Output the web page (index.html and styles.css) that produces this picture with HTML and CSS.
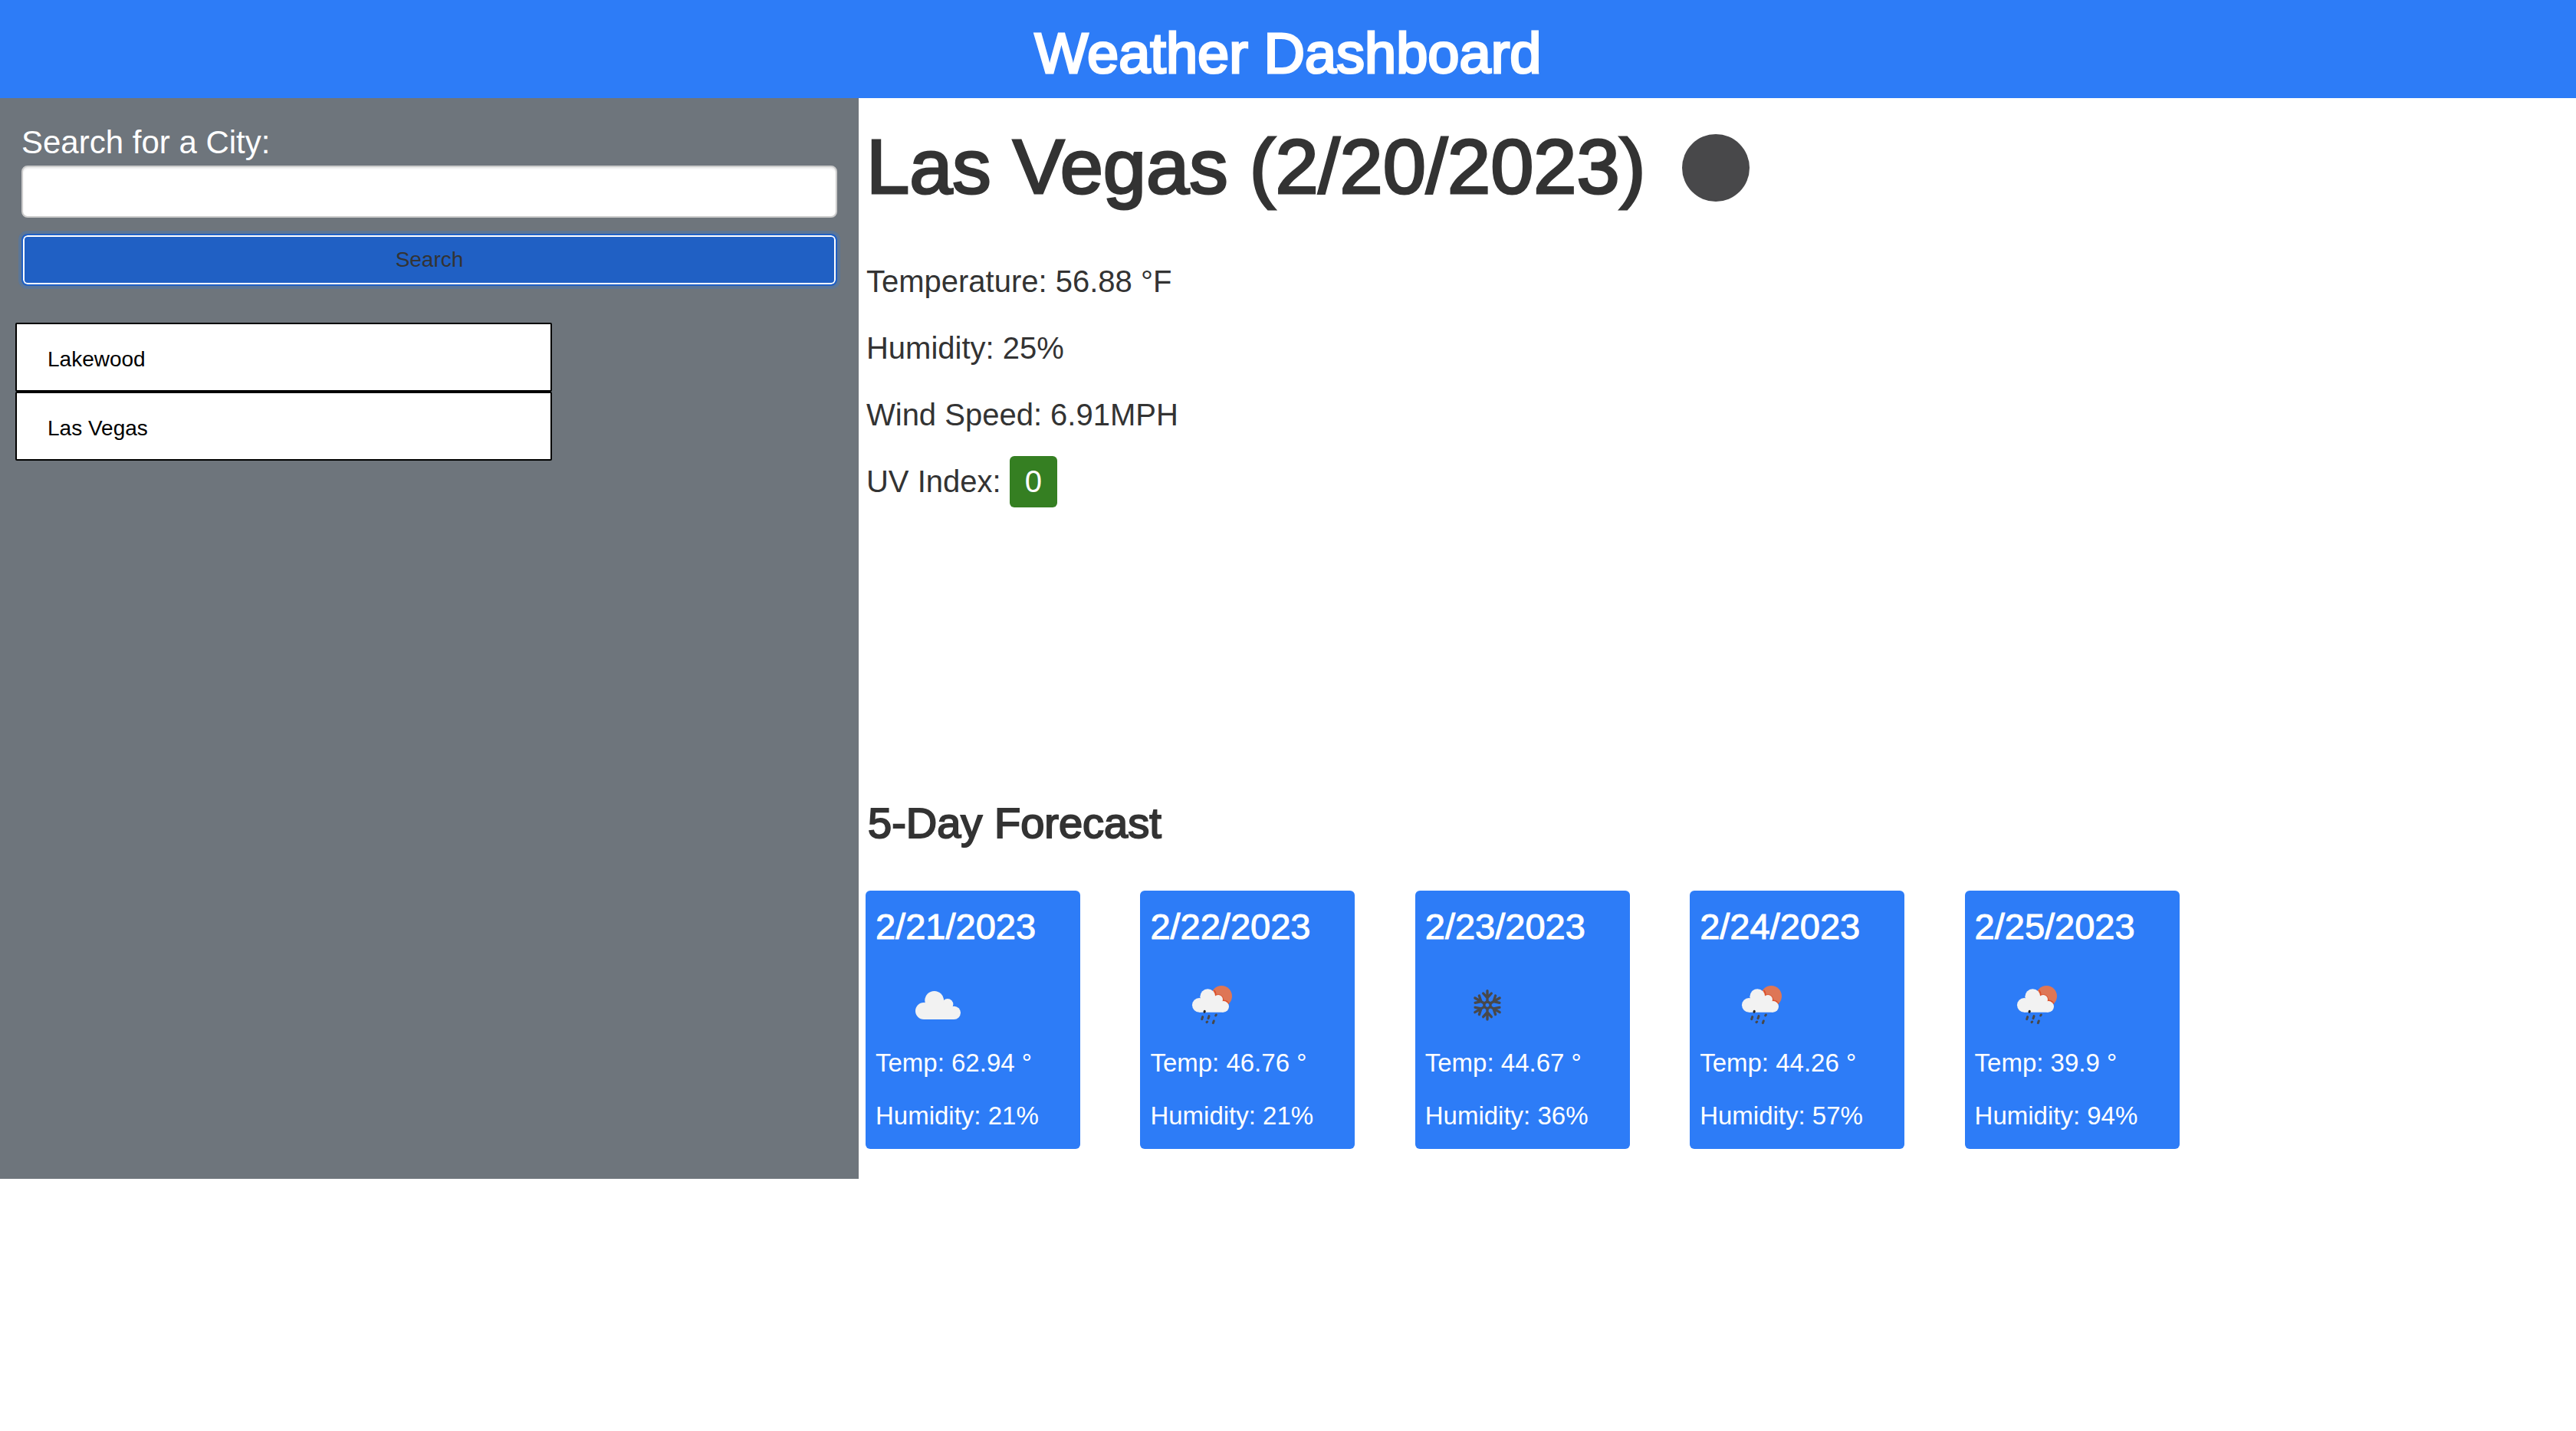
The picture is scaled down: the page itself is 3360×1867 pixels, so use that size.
FILE: index.html
```html
<!DOCTYPE html>
<html lang="en">
<head>
<meta charset="utf-8">
<meta name="viewport" content="width=device-width, initial-scale=1">
<title>Weather Dashboard</title>
<link rel="stylesheet" href="styles.css">
</head>
<body>
<svg class="sprite" aria-hidden="true">
  <symbol id="cloud" viewBox="0 0 100 100">
    <g transform="translate(6 9) scale(.3333)" fill="#f2f2f2">
      <circle cx="75" cy="147" r="33"/><circle cx="116" cy="106" r="37"/><circle cx="168" cy="121" r="22"/><circle cx="193" cy="154" r="26"/>
      <path d="M75 140L100 120L155 112L185 140L193 180H75Z"/>
    </g>
  </symbol>
  <symbol id="rain" viewBox="0 0 100 100">
    <g transform="translate(7 9) scale(.3333)">
      <circle cx="163" cy="89" r="41" fill="#de7656"/>
      <path d="M134 66Q142 78 139 86Q165 77 170 107Q184 106 191 119" fill="none" stroke="#dc4f28" stroke-width="5"/>
      <g fill="#f2f2f2">
        <circle cx="76" cy="124" r="28"/><circle cx="109" cy="91" r="30"/><circle cx="150" cy="102" r="18"/><circle cx="170" cy="130" r="22"/>
        <path d="M76 115L100 100L148 95L166 115L170 152H76Z"/>
      </g>
      <g stroke="#48484a" stroke-width="9" stroke-linecap="round">
        <path d="M97 148L96 151" stroke="#222"/>
        <path d="M89 170L86 179M114 167L111 176M142 162L140 165M107 189L105 191M133 186L130 194"/>
      </g>
    </g>
  </symbol>
  <symbol id="snow" viewBox="0 0 100 100">
    <g transform="translate(9 9) scale(.3333)" fill="none" stroke="#48484a" stroke-width="10" stroke-linecap="round" stroke-linejoin="round">
      <path d="M120 110L132 117V131L120 138L108 131V117Z"/>
      <g id="arm"><path d="M120 110V68M104 78L120 96L136 78"/></g>
      <use href="#arm" transform="rotate(60 120 124)"/>
      <use href="#arm" transform="rotate(120 120 124)"/>
      <use href="#arm" transform="rotate(180 120 124)"/>
      <use href="#arm" transform="rotate(240 120 124)"/>
      <use href="#arm" transform="rotate(300 120 124)"/>
    </g>
  </symbol>
</svg>

<header class="banner"><h1>Weather Dashboard</h1></header>

<div class="page">
  <aside class="sidebar">
    <form class="search" onsubmit="return false">
      <label for="city">Search for a City:</label>
      <input id="city" type="text">
      <button type="submit">Search</button>
    </form>
    <ul class="history">
      <li><button type="button">Lakewood</button></li>
      <li><button type="button">Las Vegas</button></li>
    </ul>
  </aside>

  <main class="content">
    <section class="current">
      <div class="current-title">
        <h2>Las Vegas (2/20/2023)</h2>
        <svg class="sky" viewBox="0 0 92 92" role="img" aria-label="Clear night"><circle cx="46" cy="48" r="44" fill="#48484a"/></svg>
      </div>
      <p>Temperature: 56.88 °F</p>
      <p>Humidity: 25%</p>
      <p>Wind Speed: 6.91MPH</p>
      <p>UV Index: <span class="uv">0</span></p>
    </section>

    <section class="forecast">
      <h3>5-Day Forecast</h3>
      <div class="cards">
        <article class="card">
          <h4>2/21/2023</h4>
          <svg class="icon" role="img" aria-label="Clouds"><use href="#cloud"/></svg>
          <p>Temp: 62.94 °</p>
          <p>Humidity: 21%</p>
        </article>
        <article class="card">
          <h4>2/22/2023</h4>
          <svg class="icon" role="img" aria-label="Rain"><use href="#rain"/></svg>
          <p>Temp: 46.76 °</p>
          <p>Humidity: 21%</p>
        </article>
        <article class="card">
          <h4>2/23/2023</h4>
          <svg class="icon" role="img" aria-label="Snow"><use href="#snow"/></svg>
          <p>Temp: 44.67 °</p>
          <p>Humidity: 36%</p>
        </article>
        <article class="card">
          <h4>2/24/2023</h4>
          <svg class="icon" role="img" aria-label="Rain"><use href="#rain"/></svg>
          <p>Temp: 44.26 °</p>
          <p>Humidity: 57%</p>
        </article>
        <article class="card">
          <h4>2/25/2023</h4>
          <svg class="icon" role="img" aria-label="Rain"><use href="#rain"/></svg>
          <p>Temp: 39.9 °</p>
          <p>Humidity: 94%</p>
        </article>
      </div>
    </section>
  </main>
</div>
</body>
</html>
```
FILE: styles.css
```css
* { box-sizing: border-box; }

body {
  margin: 0;
  background: #fff;
  color: #333;
  font-family: "Helvetica Neue", "Liberation Sans", Arial, sans-serif;
}

h1, h2, h3, h4, p, ul { margin: 0; padding: 0; font-weight: 400; }
button, input { font: inherit; }
.sprite { display: none; }

/* headings are drawn slightly heavier than the body text */
h1, h2, h3 { -webkit-text-stroke: 2px currentColor; }
h1, h2 { -webkit-text-stroke-width: 3px; }

.banner {
  padding: 30px 16px 18px;
  background: #2d7cf7;
  color: #fff;
  text-align: center;
}
.banner h1 { font-size: 74px; line-height: 80px; }

.page { display: flex; }

.sidebar {
  flex: 0 0 33.3333%;
  padding: 28px 0;
  background: #6e757c;
}
.search { display: flex; flex-direction: column; margin: 0 28px; }
.search label { color: #fff; font-size: 42px; line-height: 60px; }
.search input {
  height: 68px;
  padding: 0 24px;
  border: 2px solid #ccc;
  border-radius: 8px;
  background: #fff;
  box-shadow: inset 0 2px 2px rgba(0, 0, 0, .08);
  font-size: 28px;
}
.search button {
  height: 68px;
  margin-top: 21px;
  border: 2px solid #2060c4;
  border-radius: 8px;
  background: #2060c4;
  box-shadow: inset 0 0 0 2px #fff, 0 0 0 4px rgba(60, 120, 200, .35);
  color: #333;
  font-size: 28px;
}

.history { width: 62.5%; margin: 48px 0 0 20px; list-style: none; }
.history button {
  display: block;
  width: 100%;
  padding: 21px 40px 15px;
  border: 2px solid #000;
  border-radius: 2px;
  background: #fff;
  color: #000;
  font-size: 28px;
  line-height: 50px;
  text-align: left;
}

.content { flex: 1; padding: 33px 0 39px; }

.current { min-height: 883px; padding-left: 10px; }
.current-title { display: flex; align-items: center; gap: 46px; margin-bottom: 51px; }
.current-title h2 { font-size: 101px; line-height: 112px; }
.sky { width: 92px; height: 92px; }
.current p { font-size: 40px; line-height: 87px; }
.uv {
  display: inline-block;
  padding: 0 20px;
  border-radius: 6px;
  background: #357f22;
  color: #fff;
  line-height: 67px;
}

.forecast h3 { margin: 0 0 58px 12px; font-size: 56px; line-height: 60px; }
.cards { display: flex; gap: 3.5%; margin-left: 9px; margin-right: -9px; }
.card {
  flex: 0 0 12.5%;
  padding: 17px 13px 18px;
  border-radius: 6px;
  background: #2d7cf7;
  color: #fff;
}
.card h4 { font-size: 47px; line-height: 60px; -webkit-text-stroke: 1px currentColor; }
.icon { display: block; width: 100px; height: 100px; margin: 22px 0 0 32px; }
.card p {
  font-size: 33px;
  font-weight: 300;
  line-height: 51px;
  white-space: nowrap;
}
.card p + p { margin-top: 18px; }
```
